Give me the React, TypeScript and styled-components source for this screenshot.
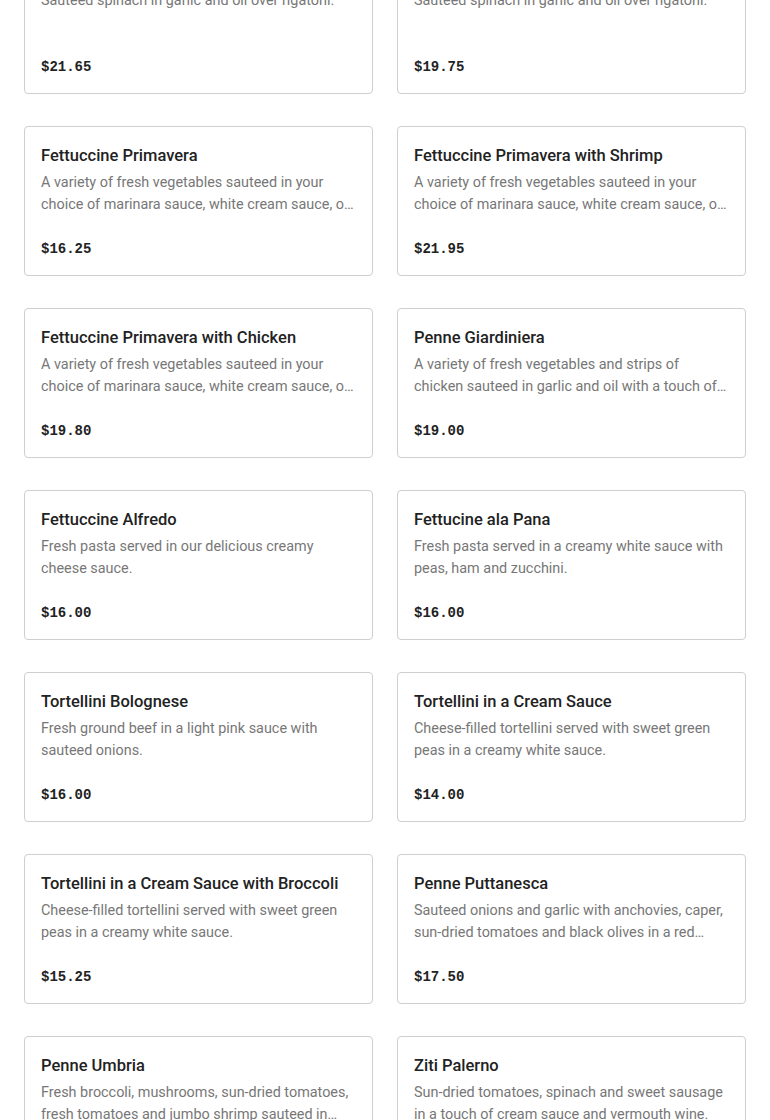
import React from 'react';
import styled, { createGlobalStyle } from 'styled-components';

type MenuItem = {
  name: string;
  description: string;
  price: string;
};

const items: MenuItem[] = [
  { name: 'Rigatoni Spinaci with Shrimp', description: 'Sauteed spinach in garlic and oil over rigatoni.', price: '$21.65' },
  { name: 'Rigatoni Spinaci with Chicken', description: 'Sauteed spinach in garlic and oil over rigatoni.', price: '$19.75' },
  { name: 'Fettuccine Primavera', description: 'A variety of fresh vegetables sauteed in your choice of marinara sauce, white cream sauce, or garlic and oil.', price: '$16.25' },
  { name: 'Fettuccine Primavera with Shrimp', description: 'A variety of fresh vegetables sauteed in your choice of marinara sauce, white cream sauce, or garlic and oil.', price: '$21.95' },
  { name: 'Fettuccine Primavera with Chicken', description: 'A variety of fresh vegetables sauteed in your choice of marinara sauce, white cream sauce, or garlic and oil.', price: '$19.80' },
  { name: 'Penne Giardiniera', description: 'A variety of fresh vegetables and strips of chicken sauteed in garlic and oil with a touch of marinara sauce.', price: '$19.00' },
  { name: 'Fettuccine Alfredo', description: 'Fresh pasta served in our delicious creamy cheese sauce.', price: '$16.00' },
  { name: 'Fettucine ala Pana', description: 'Fresh pasta served in a creamy white sauce with peas, ham and zucchini.', price: '$16.00' },
  { name: 'Tortellini Bolognese', description: 'Fresh ground beef in a light pink sauce with sauteed onions.', price: '$16.00' },
  { name: 'Tortellini in a Cream Sauce', description: 'Cheese-filled tortellini served with sweet green peas in a creamy white sauce.', price: '$14.00' },
  { name: 'Tortellini in a Cream Sauce with Broccoli', description: 'Cheese-filled tortellini served with sweet green peas in a creamy white sauce.', price: '$15.25' },
  { name: 'Penne Puttanesca', description: 'Sauteed onions and garlic with anchovies, caper, sun-dried tomatoes and black olives in a red sauce.', price: '$17.50' },
  { name: 'Penne Umbria', description: 'Fresh broccoli, mushrooms, sun-dried tomatoes, fresh tomatoes and jumbo shrimp sauteed in garlic and oil.', price: '$22.50' },
  { name: 'Ziti Palerno', description: 'Sun-dried tomatoes, spinach and sweet sausage in a touch of cream sauce and vermouth wine.', price: '$17.25' },
];

const GlobalStyle = createGlobalStyle`
  body {
    margin: 0;
    background: #fff;
    font-family: Roboto, "Liberation Sans", sans-serif;
    color: #222;
  }
`;

// the page is seen scrolled partway down the menu
const Page = styled.main`
  margin-top: -56px;
  padding: 0 24px 32px;
`;

const Grid = styled.div`
  display: grid;
  grid-template-columns: 1fr 1fr;
  column-gap: 24px;
  row-gap: 32px;
`;

const Card = styled.article`
  box-sizing: border-box;
  height: 150px;
  padding: 17px 16px 14px;
  border: 1px solid #cfcfcf;
  border-radius: 4px;
  background: #fff;
  display: flex;
  flex-direction: column;
`;

const Name = styled.h3`
  margin: 0 0 4px;
  font-size: 16.5px;
  line-height: 24px;
  font-weight: 500;
  color: #222;
  white-space: nowrap;
  overflow: hidden;
  text-overflow: ellipsis;
`;

const Description = styled.p`
  margin: 0;
  height: 44px;
  font-size: 14.4px;
  line-height: 22px;
  color: #777;
  display: -webkit-box;
  -webkit-line-clamp: 2;
  -webkit-box-orient: vertical;
  overflow: hidden;
`;

const Price = styled.span`
  margin-top: auto;
  font-family: "Liberation Mono", "DejaVu Sans Mono", monospace;
  font-size: 14px;
  line-height: 24px;
  font-weight: 700;
  color: #222;
`;

const App: React.FC = () => (
  <>
    <GlobalStyle />
    <Page>
      <Grid>
        {items.map((item) => (
          <Card key={item.name}>
            <Name>{item.name}</Name>
            <Description>{item.description}</Description>
            <Price>{item.price}</Price>
          </Card>
        ))}
      </Grid>
    </Page>
  </>
);

export default App;
